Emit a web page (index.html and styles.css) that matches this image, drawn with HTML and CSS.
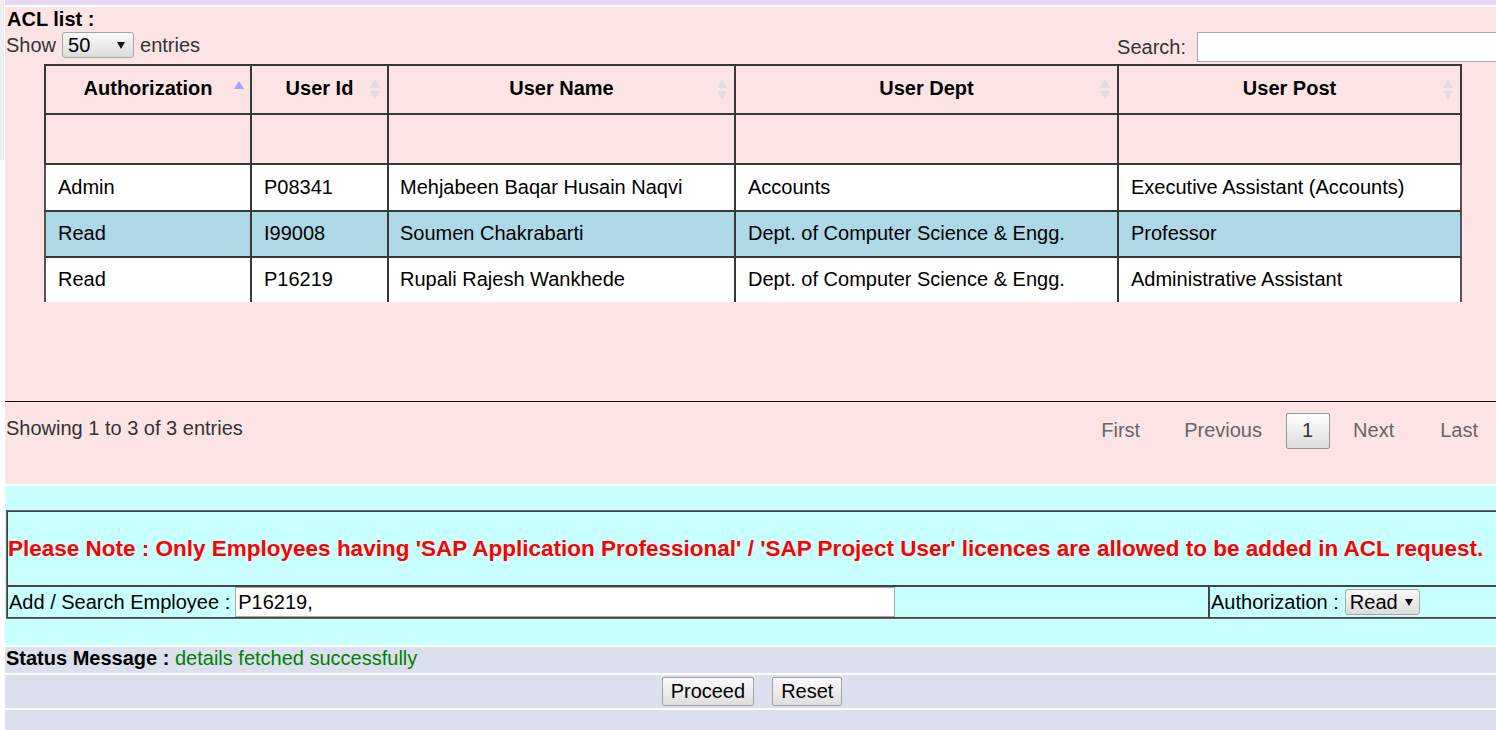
FILE: index.html
```html
<!DOCTYPE html>
<html lang="en">
<head>
<meta charset="utf-8">
<title>ACL list</title>
<link rel="stylesheet" href="styles.css">
</head>
<body>
<div class="shell">
  <div class="strip"></div>
  <div class="main">
    <div class="topbar"></div>
    <section class="acl">
      <div class="acl-title">ACL list :</div>
      <div class="toolbar">
        <label class="length">Show <span class="sel sel-len"><select><option>50</option></select></span> entries</label>
        <label class="filter">Search: <input class="search" type="search"></label>
      </div>
      <table class="grid grid-head">
        <colgroup><col class="c1"><col class="c2"><col class="c3"><col class="c4"><col class="c5"></colgroup>
        <thead>
          <tr>
            <th>Authorization<svg class="sort sort-asc" width="10" height="8" viewBox="0 0 10 8"><path d="M5 0L10 8H0Z" fill="#a3a3ff"/></svg></th>
            <th>User Id<svg class="sort sort-both" width="10" height="21" viewBox="0 0 10 21"><path d="M5 0L10 9H0Z M5 21L10 12H0Z" fill="#dedede"/></svg></th>
            <th>User Name<svg class="sort sort-both" width="10" height="21" viewBox="0 0 10 21"><path d="M5 0L10 9H0Z M5 21L10 12H0Z" fill="#dedede"/></svg></th>
            <th>User Dept<svg class="sort sort-both" width="10" height="21" viewBox="0 0 10 21"><path d="M5 0L10 9H0Z M5 21L10 12H0Z" fill="#dedede"/></svg></th>
            <th>User Post<svg class="sort sort-both" width="10" height="21" viewBox="0 0 10 21"><path d="M5 0L10 9H0Z M5 21L10 12H0Z" fill="#dedede"/></svg></th>
          </tr>
          <tr class="filters"><td>&nbsp;</td><td>&nbsp;</td><td>&nbsp;</td><td>&nbsp;</td><td>&nbsp;</td></tr>
        </thead>
      </table>
      <div class="scroll-body">
        <table class="grid grid-body">
          <colgroup><col class="c1"><col class="c2"><col class="c3"><col class="c4"><col class="c5"></colgroup>
          <tbody>
            <tr><td>Admin</td><td>P08341</td><td>Mehjabeen Baqar Husain Naqvi</td><td>Accounts</td><td>Executive Assistant (Accounts)</td></tr>
            <tr class="picked"><td>Read</td><td>I99008</td><td>Soumen Chakrabarti</td><td>Dept. of Computer Science &amp; Engg.</td><td>Professor</td></tr>
            <tr><td>Read</td><td>P16219</td><td>Rupali Rajesh Wankhede</td><td>Dept. of Computer Science &amp; Engg.</td><td>Administrative Assistant</td></tr>
          </tbody>
        </table>
      </div>
      <div class="dt-footer">
        <div class="info">Showing 1 to 3 of 3 entries</div>
        <div class="paginate">
          <a>First</a><a>Previous</a><a class="current">1</a><a>Next</a><a class="last">Last</a>
        </div>
      </div>
    </section>
    <section class="request">
      <table class="req">
        <colgroup><col class="rc1"><col class="rc2"></colgroup>
        <tbody>
          <tr><td class="note" colspan="2">Please Note : Only Employees having 'SAP Application Professional' / 'SAP Project User' licences are allowed to be added in ACL request.</td></tr>
          <tr>
            <td><div class="field">Add / Search Employee : <input class="emp" type="text" value="P16219,"></div></td>
            <td><div class="field">Authorization : <span class="sel sel-auth"><select><option>Read</option></select></span></div></td>
          </tr>
        </tbody>
      </table>
    </section>
    <div class="status"><b>Status Message :</b> <span class="ok">details fetched successfully</span></div>
    <div class="actions"><button class="btn">Proceed</button><button class="btn">Reset</button></div>
    <div class="tail"></div>
  </div>
</div>
</body>
</html>
```
FILE: styles.css
```css
* { box-sizing: border-box; }
html, body { margin: 0; padding: 0; overflow: hidden; background: #fff; }
body {
  font-family: "Liberation Sans", Arial, sans-serif;
  font-size: 20px;
  line-height: 23px;
  color: #000;
  width: 1496px;
  height: 730px;
}
.shell { display: flex; align-items: flex-start; }
.strip { width: 4px; height: 160px; background: #efefef; margin-right: 1px; flex: none; }
.main { width: 1491px; flex: none; }
.topbar { height: 5px; background: #e6d7f3; margin-bottom: 2px; }

.acl { height: 477px; background: #fde4e4; padding-top: 1px; }
.acl-title { font-weight: bold; padding-left: 2px; }
.toolbar {
  display: flex; justify-content: space-between; align-items: flex-start;
  margin-top: 1px; height: 32px; color: #333;
}
.length { display: flex; align-items: center; gap: 6px; height: 26px; padding-left: 1px; }
.filter { display: flex; align-items: center; gap: 11px; height: 30px; margin-right: -12px; }
.search {
  width: 311px; height: 30px; border: 1px solid #aaa; background: #fff;
  font-family: inherit; font-size: 20px; padding: 0 4px;
}

.sel { position: relative; display: inline-block; height: 26px; }
.sel select {
  appearance: none; -webkit-appearance: none;
  font-family: inherit; font-size: 20px; color: #000;
  border: 1px solid #a6a6a6; border-radius: 3px;
  background: linear-gradient(#f9f9f9, #dcdcdc);
  height: 26px; padding: 0 0 0 5px; line-height: 24px;
}
.sel::after {
  content: ""; position: absolute; right: 9px; top: 10px;
  border-left: 4px solid transparent; border-right: 4px solid transparent;
  border-top: 7px solid #111; pointer-events: none;
}
.sel-len select { width: 72px; }
.sel-auth { margin-left: 1px; }
.sel-auth select { width: 75px; padding-left: 4px; }
.sel-auth::after { right: 7px; }

.grid {
  border-collapse: separate; border-spacing: 0; table-layout: fixed;
  width: 1418px; margin-left: 39px;
}
.grid .c1 { width: 208px; }
.grid .c2 { width: 137px; }
.grid .c3 { width: 347px; }
.grid .c4 { width: 383px; }
.grid .c5 { width: 343px; }
.grid th, .grid td {
  border-right: 2px solid #383838; border-bottom: 2px solid #383838;
  padding: 0 12px; white-space: nowrap; overflow: hidden;
}
.grid th:first-child, .grid td:first-child { border-left: 2px solid #383838; }
.grid-head tr:first-child th { border-top: 2px solid #383838; }
.grid th { position: relative; padding: 11px 12px 13px; text-align: center; font-weight: bold; }
.filters td { padding: 12px 0 13px; }
.sort { position: absolute; display: block; }
.sort-asc { right: 6px; top: 15px; }
.sort-both { right: 7px; top: 13px; }

.scroll-body { height: 237px; border-bottom: 1px solid #111; }
.grid-body td { padding: 11px 12px; background: #fff; }
.grid-body td:nth-child(3) { padding-left: 11px; }
.grid-body tr:nth-child(n+2) td { padding-top: 10px; }
.grid-body tr:last-child td { border-bottom: 0; }
.grid-body td:first-child { border-left-color: #555; }
.grid-body td:last-child { border-right-color: #555; }
.grid-body tr.picked td { background: #add8e6; }

.dt-footer {
  display: flex; justify-content: space-between; align-items: flex-start;
  height: 82px; color: #333;
}
.info { padding-top: 15px; padding-left: 1px; }
.paginate { display: flex; align-items: center; padding-top: 11px; margin-right: -3px; }
.paginate a {
  display: block; margin-left: 2px; padding: 0 20px 2px;
  border: 1px solid transparent; border-radius: 2px;
  line-height: 32px; color: #666; cursor: pointer;
}
.paginate a.current {
  margin-left: 3px; padding: 0 16px 2px 15px; color: #333; border-color: #979797;
  background: linear-gradient(#ffffff, #dcdcdc);
}
.paginate a.last { margin-left: 4px; }

.request { margin-top: 2px; height: 159px; background: #c8ffff; padding-top: 24px; }
.req {
  width: 1500px; margin-left: 1px; border: 1px solid #666;
  border-spacing: 0; table-layout: fixed;
}
.req .rc1 { width: 1202px; }
.req .rc2 { width: 296px; }
.req td { border: 1px solid #444; padding: 0 1px; white-space: nowrap; }
.req td.note { padding: 25px 0; color: #f00; font-weight: bold; font-size: 22.5px; }
.field { display: flex; align-items: center; gap: 5px; height: 30px; }
.emp {
  width: 660px; height: 30px; border: 1px solid #aaa; background: #fff;
  font-family: inherit; font-size: 20px; color: #000; padding: 0 2px;
}

.status { margin-top: 2px; height: 26px; background: #dce0ee; padding-left: 1px; }
.status b { font-weight: bold; }
.ok { color: #008000; }
.actions {
  margin-top: 2px; height: 33px; background: #dce0ee;
  display: flex; justify-content: center; align-items: center; gap: 18px; padding-left: 3px;
}
.btn {
  font-family: inherit; font-size: 20px; line-height: 23px; padding: 2px 8px;
  border: 1px solid #a0a0a0; border-radius: 2px;
  background: linear-gradient(#fafafa, #dedede); color: #000;
}
.tail { margin-top: 2px; height: 40px; background: #dce0ee; }
```
